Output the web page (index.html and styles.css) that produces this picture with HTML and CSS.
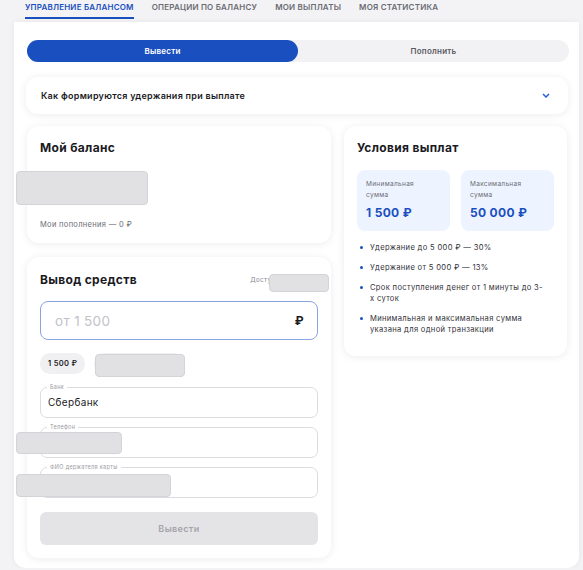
FILE: index.html
```html
<!DOCTYPE html>
<html lang="ru">
<head>
    <meta charset="UTF-8">
    <meta name="viewport" content="width=device-width, initial-scale=1.0">
    <title>Управление балансом</title>
    <link rel="stylesheet" href="styles.css">
</head>
<body>
    <nav class="tabs">
        <a class="tab active">Управление балансом</a>
        <a class="tab">Операции по балансу</a>
        <a class="tab">Мои выплаты</a>
        <a class="tab">Моя статистика</a>
    </nav>

    <main class="panel">
        <div class="switch">
            <button class="switch-btn on">Вывести</button>
            <button class="switch-btn">Пополнить</button>
        </div>

        <div class="accordion">
            <span>Как формируются удержания при выплате</span>
            <svg class="chevron" width="8" height="5" viewBox="0 0 8 5"><path d="M1 1l3 3 3-3" fill="none" stroke="#2a62d6" stroke-width="1.5"/></svg>
        </div>

        <div class="columns">
            <div class="col">
                <section class="card balance">
                    <h2>Мой баланс</h2>
                    <p class="muted-line">Доступно</p>
                    <div class="amount-space"></div>
                    <p class="small-gray">Мои пополнения — 0 ₽</p>
                    <div class="redact r-balance"></div>
                </section>

                <section class="card withdraw">
                    <div class="withdraw-head">
                        <h2>Вывод средств</h2>
                        <span class="avail">Доступно</span>
                    </div>
                    <div class="amount-input">
                        <span class="placeholder">от 1 500</span>
                        <span class="rub">₽</span>
                    </div>
                    <div class="chips">
                        <span class="chip">1 500 ₽</span>
                        <span class="chip wide">Всё</span>
                    </div>
                    <fieldset class="field">
                        <legend>Банк</legend>
                        <span class="field-value">Сбербанк</span>
                    </fieldset>
                    <fieldset class="field">
                        <legend>Телефон</legend>
                        <span class="field-value"></span>
                    </fieldset>
                    <fieldset class="field">
                        <legend>ФИО держателя карты</legend>
                        <span class="field-value"></span>
                    </fieldset>
                    <button class="submit" disabled>Вывести</button>

                    <div class="redact r-avail"></div>
                    <div class="redact r-chip"></div>
                    <div class="redact r-phone"></div>
                    <div class="redact r-name"></div>
                </section>
            </div>

            <section class="card terms">
                <h2>Условия выплат</h2>
                <div class="limits">
                    <div class="limit">
                        <span class="limit-label">Минимальная сумма</span>
                        <span class="limit-value">1 500 ₽</span>
                    </div>
                    <div class="limit">
                        <span class="limit-label">Максимальная сумма</span>
                        <span class="limit-value">50 000 ₽</span>
                    </div>
                </div>
                <ul class="rules">
                    <li>Удержание до 5 000 ₽ — 30%</li>
                    <li>Удержание от 5 000 ₽ — 13%</li>
                    <li>Срок поступления денег от 1 минуты до 3-х суток</li>
                    <li>Минимальная и максимальная сумма указана для одной транзакции</li>
                </ul>
            </section>
        </div>
    </main>
</body>
</html>
```

FILE: styles.css
```css
body {
    margin: 0;
    background-color: #f3f3f5;
    font-family: Inter, "Open Sans", sans-serif;
    color: #1b1b1f;
    letter-spacing: 0.02em;
}
.tabs {
    display: flex;
    gap: 18px;
    height: 22px;
    padding-left: 25px;
}
.tab {
    font-size: 8px;
    font-weight: 600;
    text-transform: uppercase;
    letter-spacing: 0.025em;
    color: #6c6c74;
    line-height: 14px;
    height: 17px;
}
.tab.active {
    color: #1a4fbf;
    border-bottom: 2px solid #1a4fbf;
}
.panel {
    margin-left: 14px;
    width: 565px;
    box-sizing: border-box;
    min-height: 545px;
    background-color: #fff;
    border-radius: 0 0 12px 12px;
    padding: 18px 10px 10px 12px;
    box-shadow: 0 0 6px rgba(0, 0, 0, 0.05);
}
.switch {
    display: flex;
    height: 22px;
    margin-left: 1px;
    border-radius: 11px;
    background-color: #f2f2f4;
}
.switch-btn {
    flex: 1;
    border: none;
    background: none;
    border-radius: 11px;
    font-family: inherit;
    font-size: 8px;
    font-weight: 600;
    letter-spacing: 0.03em;
    color: #5a5a62;
}
.switch-btn.on {
    background-color: #1a4fbf;
    color: #fff;
}
.accordion {
    display: flex;
    align-items: center;
    justify-content: space-between;
    height: 37px;
    margin-top: 15px;
    margin-right: 1px;
    padding: 0 18px 0 15px;
    border-radius: 12px;
    box-shadow: 0 1px 8px rgba(30, 30, 60, 0.08);
    font-size: 9px;
    font-weight: 600;
    letter-spacing: 0.03em;
}
.columns {
    display: grid;
    grid-template-columns: 304px 223px;
    gap: 13px;
    margin-top: 12px;
    padding-left: 1px;
    align-items: start;
}
.col {
    display: flex;
    flex-direction: column;
    gap: 14px;
}
.card {
    position: relative;
    background-color: #fff;
    border-radius: 12px;
    box-shadow: 0 1px 8px rgba(30, 30, 60, 0.08);
    padding: 14px 13px;
}
.card h2 {
    margin: 0;
    font-size: 12px;
    font-weight: 700;
    line-height: 15px;
}
.balance {
    height: 89px;
}
.muted-line {
    margin: 16px 0 0;
    font-size: 7px;
    color: #6c6c74;
}
.amount-space {
    height: 30px;
}
.small-gray {
    margin: 10px 0 0;
    font-size: 7.5px;
    color: #6c6c74;
}
.redact {
    position: absolute;
    background-color: #e1e1e4;
    border: 1px solid #d4d4d8;
    border-radius: 4px;
}
.r-balance {
    left: -11px;
    top: 45px;
    width: 130px;
    height: 32px;
}
.withdraw {
    padding-bottom: 13px;
}
.withdraw-head {
    display: flex;
    justify-content: space-between;
    align-items: center;
    margin-top: 1px;
}
.avail {
    font-size: 6.5px;
    color: #8a8a92;
    margin-right: 34px;
}
.r-avail {
    left: 242px;
    top: 17px;
    width: 58px;
    height: 16px;
}
.amount-input {
    display: flex;
    justify-content: space-between;
    align-items: center;
    height: 37px;
    margin-top: 14px;
    padding: 0 13px 0 14px;
    border: 1px solid #8aa4e0;
    border-radius: 8px;
}
.placeholder {
    font-size: 13.5px;
    color: #c2c2c8;
}
.rub {
    font-size: 12px;
    font-weight: 700;
}
.chips {
    display: flex;
    gap: 9px;
    margin-top: 13px;
}
.chip {
    font-size: 7.5px;
    font-weight: 600;
    background-color: #f0f0f2;
    border-radius: 10px;
    padding: 6px 8px;
}
.chip.wide {
    width: 74px;
    color: transparent;
}
.r-chip {
    left: 68px;
    top: 97px;
    width: 88px;
    height: 21px;
}
.field {
    margin: 6px 0 0;
    padding: 0 7px;
    height: 34px;
    box-sizing: border-box;
    border: 1px solid #dcdce0;
    border-radius: 7px;
    display: flex;
    align-items: center;
}
.chips + .field {
    margin-top: 10px;
}
.field legend {
    font-size: 5.5px;
    color: #9a9aa2;
    padding: 0 3px;
    margin-left: -1px;
}
.field-value {
    font-size: 10px;
    margin-top: -3px;
}
.r-phone {
    left: -11px;
    top: 175px;
    width: 104px;
    height: 20px;
}
.r-name {
    left: -11px;
    top: 217px;
    width: 153px;
    height: 21px;
}
.submit {
    display: block;
    width: 100%;
    height: 33px;
    margin-top: 14px;
    border: none;
    border-radius: 6px;
    background-color: #e4e4e6;
    color: #a4a4aa;
    font-family: inherit;
    font-size: 9px;
    font-weight: 600;
    letter-spacing: 0.04em;
}
.terms {
    padding-bottom: 12px;
}
.limits {
    display: grid;
    grid-template-columns: 1fr 1fr;
    gap: 11px;
    margin-top: 15px;
}
.limit {
    display: flex;
    flex-direction: column;
    background-color: #eef4ff;
    border-radius: 8px;
    padding: 9px 9px 10px;
    height: 42px;
}
.limit-label {
    font-size: 6.5px;
    color: #6c6c74;
    line-height: 11px;
    width: 60px;
}
.limit-value {
    margin-top: 4px;
    font-size: 12px;
    font-weight: 700;
    color: #1a4fbf;
}
.rules {
    margin: 11px 0 0;
    padding: 0 0 0 3px;
    list-style: none;
}
.rules li {
    position: relative;
    padding-left: 10px;
    padding-right: 8px;
    font-size: 7.6px;
    line-height: 11px;
    color: #33333a;
    margin-bottom: 9px;
}
.rules li::before {
    content: "";
    position: absolute;
    left: 0;
    top: 4px;
    width: 3px;
    height: 3px;
    border-radius: 50%;
    background-color: #1a4fbf;
}
```
